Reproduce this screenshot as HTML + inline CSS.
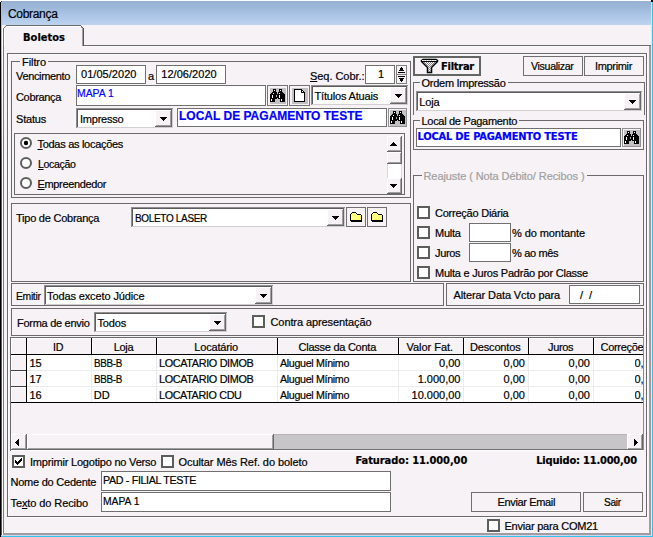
<!DOCTYPE html><html lang="pt-BR"><head><meta charset="utf-8"><title>Cobrança</title><style>
html,body{margin:0;padding:0;background:#f6f2f6;}
#w{position:relative;width:653px;height:537px;overflow:hidden;font-family:'Liberation Sans', sans-serif;font-size:11px;color:#000;}
#w div,#w svg,#w span{position:absolute;box-sizing:border-box;}
#w span{white-space:nowrap;line-height:14px;height:14px;-webkit-text-stroke:0.2px currentColor;}
#w u{text-decoration:underline;text-underline-offset:1px;text-decoration-thickness:1px;}
</style></head><body><div id="w">
<div style="left:0px;top:0px;width:653px;height:537px;background:#f6f2f6;"></div>
<div style="left:0px;top:0px;width:651px;height:25px;background:linear-gradient(#97b1d3 0%,#9db7d9 30%,#a9c3e5 55%,#bdd3ee 100%);"></div>
<div style="left:0px;top:0px;width:653px;height:1px;background:#ffffff;"></div>
<div style="left:0px;top:2px;width:1px;height:535px;background:#000;"></div>
<div style="left:1px;top:2px;width:1px;height:533px;background:linear-gradient(#a8c0e0 0px,#a8c0e0 40px,#8a98a8 90px,#56606c 160px,#4c5560 100%);"></div>
<div style="left:2px;top:25px;width:1px;height:510px;background:#ffffff;"></div>
<div style="left:0px;top:0px;width:1px;height:2px;background:#fff;"></div>
<div style="left:1px;top:1px;width:1px;height:1px;background:#444;"></div>
<div style="left:651px;top:2px;width:1px;height:534px;background:#dfe6f8;"></div>
<div style="left:652px;top:2px;width:1px;height:535px;background:#30c4ec;"></div>
<div style="left:651px;top:0px;width:2px;height:2px;background:#000;"></div>
<div style="left:1px;top:535px;width:651px;height:1px;background:#c8d8f4;"></div>
<div style="left:1px;top:536px;width:652px;height:1px;background:#30c4ec;"></div>
<div style="left:3px;top:46px;width:1px;height:489px;background:#7a7a7a;"></div>
<div style="left:649px;top:46px;width:2px;height:489px;background:#a09ca0;"></div>
<div style="left:3px;top:533px;width:648px;height:2px;background:#a09ca0;"></div>
<div style="left:83px;top:45px;width:568px;height:1px;background:#6a6a6a;"></div>
<div style="left:84px;top:46px;width:565px;height:1px;background:#ffffff;"></div>
<div style="left:4px;top:26px;width:79px;height:20px;background:#f6f2f6;"></div>
<div style="left:6px;top:25px;width:75px;height:1px;background:#6a6a6a;"></div>
<div style="left:5px;top:26px;width:1px;height:1px;background:#6a6a6a;"></div>
<div style="left:4px;top:27px;width:1px;height:1px;background:#6a6a6a;"></div>
<div style="left:3px;top:28px;width:1px;height:18px;background:#7a7a7a;"></div>
<div style="left:6px;top:26px;width:75px;height:1px;background:#ffffff;"></div>
<div style="left:4px;top:28px;width:1px;height:18px;background:#ffffff;"></div>
<div style="left:5px;top:27px;width:1px;height:1px;background:#fff;"></div>
<div style="left:81px;top:26px;width:1px;height:1px;background:#555;"></div>
<div style="left:82px;top:27px;width:1px;height:1px;background:#555;"></div>
<div style="left:83px;top:28px;width:1px;height:18px;background:#555;"></div>
<div style="left:82px;top:28px;width:1px;height:18px;background:#a0a0a0;"></div>
<div style="left:81px;top:27px;width:1px;height:1px;background:#a0a0a0;"></div>
<div style="left:7px;top:53px;width:640px;height:464px;border:1px solid #6a6a6a;"></div>
<div style="left:8px;top:54px;width:638px;height:1px;background:#fff;"></div>
<div style="left:8px;top:54px;width:1px;height:462px;background:#fff;"></div>
<div style="left:7px;top:517px;width:641px;height:1px;background:#fff;"></div>
<div style="left:647px;top:53px;width:1px;height:465px;background:#fff;"></div>
<div style="left:11px;top:61px;width:400px;height:137px;border:1px solid #6a6a6a;"></div>
<div style="left:20px;top:60px;width:28px;height:3px;background:#f6f2f6;"></div>
<div style="left:76px;top:65px;width:70px;height:19px;background:#ffffff;border:1px solid #707070;"></div>
<div style="left:156px;top:65px;width:70px;height:19px;background:#ffffff;border:1px solid #707070;"></div>
<div style="left:365px;top:65px;width:30px;height:19px;background:#ffffff;border:1px solid #707070;"></div>
<div style="left:396px;top:65px;width:11px;height:19px;background:#f6f2f6;border:1px solid #808080;"></div>
<div style="left:397px;top:74px;width:9px;height:1px;background:#808080;"></div>
<div style="left:401px;top:67px;width:1px;height:1px;background:#000;"></div>
<div style="left:400px;top:68px;width:3px;height:1px;background:#000;"></div>
<div style="left:400px;top:69px;width:3px;height:1px;background:#000;"></div>
<div style="left:399px;top:70px;width:5px;height:1px;background:#000;"></div>
<div style="left:398px;top:72px;width:7px;height:1px;background:#000;"></div>
<div style="left:398px;top:76px;width:7px;height:1px;background:#000;"></div>
<div style="left:399px;top:78px;width:5px;height:1px;background:#000;"></div>
<div style="left:400px;top:79px;width:3px;height:1px;background:#000;"></div>
<div style="left:400px;top:80px;width:3px;height:1px;background:#000;"></div>
<div style="left:401px;top:81px;width:1px;height:1px;background:#000;"></div>
<div style="left:76px;top:85px;width:190px;height:21px;background:#ffffff;border:1px solid #707070;"></div>
<div style="left:267px;top:85px;width:21px;height:21px;background:#f6f2f6;border:1px solid #747474;"></div>
<svg style="left:270px;top:88px" width="16" height="16" viewBox="0 0 16 16" shape-rendering="crispEdges"><rect width="16" height="16" fill="#c2c0c2"/><rect x="3" y="1" width="3" height="1" fill="#000"/><rect x="9" y="1" width="3" height="1" fill="#000"/><rect x="3" y="2" width="1" height="1" fill="#000"/><rect x="4" y="2" width="1" height="1" fill="#fff"/><rect x="5" y="2" width="1" height="1" fill="#000"/><rect x="9" y="2" width="1" height="1" fill="#000"/><rect x="10" y="2" width="1" height="1" fill="#fff"/><rect x="11" y="2" width="1" height="1" fill="#000"/><rect x="3" y="3" width="3" height="1" fill="#000"/><rect x="9" y="3" width="3" height="1" fill="#000"/><rect x="2" y="4" width="5" height="1" fill="#000"/><rect x="8" y="4" width="5" height="1" fill="#000"/><rect x="1" y="5" width="2" height="1" fill="#000"/><rect x="3" y="5" width="1" height="1" fill="#fff"/><rect x="4" y="5" width="3" height="1" fill="#000"/><rect x="8" y="5" width="1" height="1" fill="#000"/><rect x="9" y="5" width="1" height="1" fill="#fff"/><rect x="10" y="5" width="4" height="1" fill="#000"/><rect x="0" y="6" width="15" height="1" fill="#000"/><rect x="0" y="7" width="2" height="1" fill="#000"/><rect x="2" y="7" width="1" height="1" fill="#fff"/><rect x="3" y="7" width="3" height="1" fill="#000"/><rect x="6" y="7" width="1" height="1" fill="#b0b0b0"/><rect x="7" y="7" width="2" height="1" fill="#000"/><rect x="9" y="7" width="1" height="1" fill="#fff"/><rect x="10" y="7" width="5" height="1" fill="#000"/><rect x="0" y="8" width="2" height="1" fill="#000"/><rect x="2" y="8" width="1" height="1" fill="#fff"/><rect x="3" y="8" width="3" height="1" fill="#000"/><rect x="6" y="8" width="1" height="1" fill="#b0b0b0"/><rect x="7" y="8" width="2" height="1" fill="#000"/><rect x="9" y="8" width="1" height="1" fill="#fff"/><rect x="10" y="8" width="5" height="1" fill="#000"/><rect x="0" y="9" width="2" height="1" fill="#000"/><rect x="2" y="9" width="1" height="1" fill="#fff"/><rect x="3" y="9" width="6" height="1" fill="#000"/><rect x="9" y="9" width="1" height="1" fill="#fff"/><rect x="10" y="9" width="5" height="1" fill="#000"/><rect x="0" y="10" width="7" height="1" fill="#000"/><rect x="8" y="10" width="7" height="1" fill="#000"/><rect x="0" y="11" width="1" height="1" fill="#000"/><rect x="1" y="11" width="1" height="1" fill="#fff"/><rect x="2" y="11" width="3" height="1" fill="#000"/><rect x="10" y="11" width="1" height="1" fill="#000"/><rect x="11" y="11" width="1" height="1" fill="#fff"/><rect x="12" y="11" width="3" height="1" fill="#000"/><rect x="0" y="12" width="1" height="1" fill="#000"/><rect x="1" y="12" width="1" height="1" fill="#fff"/><rect x="2" y="12" width="3" height="1" fill="#000"/><rect x="10" y="12" width="1" height="1" fill="#000"/><rect x="11" y="12" width="1" height="1" fill="#fff"/><rect x="12" y="12" width="3" height="1" fill="#000"/><rect x="0" y="13" width="5" height="1" fill="#000"/><rect x="10" y="13" width="5" height="1" fill="#000"/></svg>
<div style="left:289px;top:85px;width:21px;height:21px;background:#f6f2f6;border:1px solid #747474;"></div>
<svg style="left:292px;top:88px" width="16" height="16" viewBox="0 0 16 16" shape-rendering="crispEdges"><rect width="16" height="16" fill="#c2c0c2"/><rect x="2" y="1" width="8" height="1" fill="#000"/><rect x="2" y="2" width="1" height="1" fill="#000"/><rect x="3" y="2" width="6" height="1" fill="#fff"/><rect x="9" y="2" width="2" height="1" fill="#000"/><rect x="2" y="3" width="1" height="1" fill="#000"/><rect x="3" y="3" width="6" height="1" fill="#fff"/><rect x="9" y="3" width="1" height="1" fill="#000"/><rect x="10" y="3" width="1" height="1" fill="#fff"/><rect x="11" y="3" width="1" height="1" fill="#000"/><rect x="2" y="4" width="1" height="1" fill="#000"/><rect x="3" y="4" width="6" height="1" fill="#fff"/><rect x="9" y="4" width="4" height="1" fill="#000"/><rect x="2" y="5" width="1" height="1" fill="#000"/><rect x="3" y="5" width="9" height="1" fill="#fff"/><rect x="12" y="5" width="1" height="1" fill="#000"/><rect x="2" y="6" width="1" height="1" fill="#000"/><rect x="3" y="6" width="9" height="1" fill="#fff"/><rect x="12" y="6" width="1" height="1" fill="#000"/><rect x="2" y="7" width="1" height="1" fill="#000"/><rect x="3" y="7" width="9" height="1" fill="#fff"/><rect x="12" y="7" width="1" height="1" fill="#000"/><rect x="2" y="8" width="1" height="1" fill="#000"/><rect x="3" y="8" width="9" height="1" fill="#fff"/><rect x="12" y="8" width="1" height="1" fill="#000"/><rect x="2" y="9" width="1" height="1" fill="#000"/><rect x="3" y="9" width="9" height="1" fill="#fff"/><rect x="12" y="9" width="1" height="1" fill="#000"/><rect x="2" y="10" width="1" height="1" fill="#000"/><rect x="3" y="10" width="9" height="1" fill="#fff"/><rect x="12" y="10" width="1" height="1" fill="#000"/><rect x="2" y="11" width="1" height="1" fill="#000"/><rect x="3" y="11" width="9" height="1" fill="#fff"/><rect x="12" y="11" width="1" height="1" fill="#000"/><rect x="2" y="12" width="1" height="1" fill="#000"/><rect x="3" y="12" width="9" height="1" fill="#fff"/><rect x="12" y="12" width="1" height="1" fill="#000"/><rect x="2" y="13" width="11" height="1" fill="#000"/></svg>
<div style="left:311px;top:85px;width:97px;height:20px;background:#ffffff;"></div>
<div style="left:311px;top:85px;width:97px;height:1px;background:#8e8e8e;"></div>
<div style="left:311px;top:85px;width:1px;height:20px;background:#8e8e8e;"></div>
<div style="left:312px;top:86px;width:95px;height:1px;background:#5c5c5c;"></div>
<div style="left:312px;top:86px;width:1px;height:18px;background:#5c5c5c;"></div>
<div style="left:312px;top:104px;width:96px;height:1px;background:#d2ced2;"></div>
<div style="left:407px;top:86px;width:1px;height:19px;background:#d2ced2;"></div>
<div style="left:390px;top:87px;width:17px;height:17px;background:#f6f2f6;"></div>
<div style="left:390px;top:87px;width:17px;height:1px;background:#ffffff;"></div>
<div style="left:390px;top:87px;width:1px;height:17px;background:#ffffff;"></div>
<div style="left:390px;top:103px;width:17px;height:1px;background:#686868;"></div>
<div style="left:406px;top:87px;width:1px;height:17px;background:#686868;"></div>
<div style="left:391px;top:102px;width:15px;height:1px;background:#a0a0a0;"></div>
<div style="left:405px;top:88px;width:1px;height:15px;background:#a0a0a0;"></div>
<div style="left:395px;top:94px;width:7px;height:1px;background:#000;"></div>
<div style="left:396px;top:95px;width:5px;height:1px;background:#000;"></div>
<div style="left:397px;top:96px;width:3px;height:1px;background:#000;"></div>
<div style="left:398px;top:97px;width:1px;height:1px;background:#000;"></div>
<div style="left:76px;top:108px;width:97px;height:20px;background:#ffffff;"></div>
<div style="left:76px;top:108px;width:97px;height:1px;background:#8e8e8e;"></div>
<div style="left:76px;top:108px;width:1px;height:20px;background:#8e8e8e;"></div>
<div style="left:77px;top:109px;width:95px;height:1px;background:#5c5c5c;"></div>
<div style="left:77px;top:109px;width:1px;height:18px;background:#5c5c5c;"></div>
<div style="left:77px;top:127px;width:96px;height:1px;background:#d2ced2;"></div>
<div style="left:172px;top:109px;width:1px;height:19px;background:#d2ced2;"></div>
<div style="left:155px;top:110px;width:17px;height:17px;background:#f6f2f6;"></div>
<div style="left:155px;top:110px;width:17px;height:1px;background:#ffffff;"></div>
<div style="left:155px;top:110px;width:1px;height:17px;background:#ffffff;"></div>
<div style="left:155px;top:126px;width:17px;height:1px;background:#686868;"></div>
<div style="left:171px;top:110px;width:1px;height:17px;background:#686868;"></div>
<div style="left:156px;top:125px;width:15px;height:1px;background:#a0a0a0;"></div>
<div style="left:170px;top:111px;width:1px;height:15px;background:#a0a0a0;"></div>
<div style="left:160px;top:117px;width:7px;height:1px;background:#000;"></div>
<div style="left:161px;top:118px;width:5px;height:1px;background:#000;"></div>
<div style="left:162px;top:119px;width:3px;height:1px;background:#000;"></div>
<div style="left:163px;top:120px;width:1px;height:1px;background:#000;"></div>
<div style="left:177px;top:108px;width:210px;height:19px;background:#ffffff;border:1px solid #707070;"></div>
<div style="left:388px;top:108px;width:19px;height:19px;background:#f6f2f6;border:1px solid #909090;"></div>
<svg style="left:390px;top:110px" width="16" height="16" viewBox="0 0 16 16" shape-rendering="crispEdges"><rect width="16" height="16" fill="#c2c0c2"/><rect x="3" y="1" width="3" height="1" fill="#000"/><rect x="9" y="1" width="3" height="1" fill="#000"/><rect x="3" y="2" width="1" height="1" fill="#000"/><rect x="4" y="2" width="1" height="1" fill="#fff"/><rect x="5" y="2" width="1" height="1" fill="#000"/><rect x="9" y="2" width="1" height="1" fill="#000"/><rect x="10" y="2" width="1" height="1" fill="#fff"/><rect x="11" y="2" width="1" height="1" fill="#000"/><rect x="3" y="3" width="3" height="1" fill="#000"/><rect x="9" y="3" width="3" height="1" fill="#000"/><rect x="2" y="4" width="5" height="1" fill="#000"/><rect x="8" y="4" width="5" height="1" fill="#000"/><rect x="1" y="5" width="2" height="1" fill="#000"/><rect x="3" y="5" width="1" height="1" fill="#fff"/><rect x="4" y="5" width="3" height="1" fill="#000"/><rect x="8" y="5" width="1" height="1" fill="#000"/><rect x="9" y="5" width="1" height="1" fill="#fff"/><rect x="10" y="5" width="4" height="1" fill="#000"/><rect x="0" y="6" width="15" height="1" fill="#000"/><rect x="0" y="7" width="2" height="1" fill="#000"/><rect x="2" y="7" width="1" height="1" fill="#fff"/><rect x="3" y="7" width="3" height="1" fill="#000"/><rect x="6" y="7" width="1" height="1" fill="#b0b0b0"/><rect x="7" y="7" width="2" height="1" fill="#000"/><rect x="9" y="7" width="1" height="1" fill="#fff"/><rect x="10" y="7" width="5" height="1" fill="#000"/><rect x="0" y="8" width="2" height="1" fill="#000"/><rect x="2" y="8" width="1" height="1" fill="#fff"/><rect x="3" y="8" width="3" height="1" fill="#000"/><rect x="6" y="8" width="1" height="1" fill="#b0b0b0"/><rect x="7" y="8" width="2" height="1" fill="#000"/><rect x="9" y="8" width="1" height="1" fill="#fff"/><rect x="10" y="8" width="5" height="1" fill="#000"/><rect x="0" y="9" width="2" height="1" fill="#000"/><rect x="2" y="9" width="1" height="1" fill="#fff"/><rect x="3" y="9" width="6" height="1" fill="#000"/><rect x="9" y="9" width="1" height="1" fill="#fff"/><rect x="10" y="9" width="5" height="1" fill="#000"/><rect x="0" y="10" width="7" height="1" fill="#000"/><rect x="8" y="10" width="7" height="1" fill="#000"/><rect x="0" y="11" width="1" height="1" fill="#000"/><rect x="1" y="11" width="1" height="1" fill="#fff"/><rect x="2" y="11" width="3" height="1" fill="#000"/><rect x="10" y="11" width="1" height="1" fill="#000"/><rect x="11" y="11" width="1" height="1" fill="#fff"/><rect x="12" y="11" width="3" height="1" fill="#000"/><rect x="0" y="12" width="1" height="1" fill="#000"/><rect x="1" y="12" width="1" height="1" fill="#fff"/><rect x="2" y="12" width="3" height="1" fill="#000"/><rect x="10" y="12" width="1" height="1" fill="#000"/><rect x="11" y="12" width="1" height="1" fill="#fff"/><rect x="12" y="12" width="3" height="1" fill="#000"/><rect x="0" y="13" width="5" height="1" fill="#000"/><rect x="10" y="13" width="5" height="1" fill="#000"/></svg>
<div style="left:14px;top:133px;width:391px;height:62px;border:1px solid #6a6a6a;"></div>
<svg style="left:20px;top:137px" width="12" height="12" viewBox="0 0 12 12"><circle cx="6" cy="6" r="5" fill="#fff" stroke="#5c5e5c" stroke-width="2"/><circle cx="6" cy="6" r="2.2" fill="#000"/></svg>
<svg style="left:20px;top:157px" width="12" height="12" viewBox="0 0 12 12"><circle cx="6" cy="6" r="5" fill="#fff" stroke="#5c5e5c" stroke-width="2"/></svg>
<svg style="left:20px;top:177px" width="12" height="12" viewBox="0 0 12 12"><circle cx="6" cy="6" r="5" fill="#fff" stroke="#5c5e5c" stroke-width="2"/></svg>
<div style="left:387px;top:136px;width:15px;height:16px;background:#f6f2f6;"></div>
<div style="left:387px;top:136px;width:15px;height:1px;background:#ffffff;"></div>
<div style="left:387px;top:136px;width:1px;height:16px;background:#ffffff;"></div>
<div style="left:387px;top:151px;width:15px;height:1px;background:#686868;"></div>
<div style="left:401px;top:136px;width:1px;height:16px;background:#686868;"></div>
<div style="left:388px;top:150px;width:13px;height:1px;background:#a0a0a0;"></div>
<div style="left:400px;top:137px;width:1px;height:14px;background:#a0a0a0;"></div>
<div style="left:393px;top:142px;width:1px;height:1px;background:#000;"></div>
<div style="left:392px;top:143px;width:3px;height:1px;background:#000;"></div>
<div style="left:391px;top:144px;width:5px;height:1px;background:#000;"></div>
<div style="left:390px;top:145px;width:7px;height:1px;background:#000;"></div>
<div style="left:387px;top:152px;width:15px;height:12px;background:#f6f2f6;"></div>
<div style="left:387px;top:152px;width:15px;height:1px;background:#ffffff;"></div>
<div style="left:387px;top:152px;width:1px;height:12px;background:#ffffff;"></div>
<div style="left:387px;top:163px;width:15px;height:1px;background:#686868;"></div>
<div style="left:401px;top:152px;width:1px;height:12px;background:#686868;"></div>
<div style="left:388px;top:162px;width:13px;height:1px;background:#a0a0a0;"></div>
<div style="left:400px;top:153px;width:1px;height:10px;background:#a0a0a0;"></div>
<div style="left:387px;top:164px;width:15px;height:14px;background:#ffffff;"></div>
<div style="left:387px;top:164px;width:1px;height:14px;background:#d8d8d8;"></div>
<div style="left:401px;top:164px;width:1px;height:14px;background:#d8d8d8;"></div>
<div style="left:387px;top:178px;width:15px;height:16px;background:#f6f2f6;"></div>
<div style="left:387px;top:178px;width:15px;height:1px;background:#ffffff;"></div>
<div style="left:387px;top:178px;width:1px;height:16px;background:#ffffff;"></div>
<div style="left:387px;top:193px;width:15px;height:1px;background:#686868;"></div>
<div style="left:401px;top:178px;width:1px;height:16px;background:#686868;"></div>
<div style="left:388px;top:192px;width:13px;height:1px;background:#a0a0a0;"></div>
<div style="left:400px;top:179px;width:1px;height:14px;background:#a0a0a0;"></div>
<div style="left:390px;top:184px;width:7px;height:1px;background:#000;"></div>
<div style="left:391px;top:185px;width:5px;height:1px;background:#000;"></div>
<div style="left:392px;top:186px;width:3px;height:1px;background:#000;"></div>
<div style="left:393px;top:187px;width:1px;height:1px;background:#000;"></div>
<div style="left:11px;top:203px;width:400px;height:79px;border:1px solid #6a6a6a;"></div>
<div style="left:131px;top:207px;width:214px;height:20px;background:#ffffff;"></div>
<div style="left:131px;top:207px;width:214px;height:1px;background:#8e8e8e;"></div>
<div style="left:131px;top:207px;width:1px;height:20px;background:#8e8e8e;"></div>
<div style="left:132px;top:208px;width:212px;height:1px;background:#5c5c5c;"></div>
<div style="left:132px;top:208px;width:1px;height:18px;background:#5c5c5c;"></div>
<div style="left:132px;top:226px;width:213px;height:1px;background:#d2ced2;"></div>
<div style="left:344px;top:208px;width:1px;height:19px;background:#d2ced2;"></div>
<div style="left:327px;top:209px;width:17px;height:17px;background:#f6f2f6;"></div>
<div style="left:327px;top:209px;width:17px;height:1px;background:#ffffff;"></div>
<div style="left:327px;top:209px;width:1px;height:17px;background:#ffffff;"></div>
<div style="left:327px;top:225px;width:17px;height:1px;background:#686868;"></div>
<div style="left:343px;top:209px;width:1px;height:17px;background:#686868;"></div>
<div style="left:328px;top:224px;width:15px;height:1px;background:#a0a0a0;"></div>
<div style="left:342px;top:210px;width:1px;height:15px;background:#a0a0a0;"></div>
<div style="left:332px;top:216px;width:7px;height:1px;background:#000;"></div>
<div style="left:333px;top:217px;width:5px;height:1px;background:#000;"></div>
<div style="left:334px;top:218px;width:3px;height:1px;background:#000;"></div>
<div style="left:335px;top:219px;width:1px;height:1px;background:#000;"></div>
<div style="left:346px;top:207px;width:20px;height:20px;background:#f6f2f6;border:1px solid #707070;"></div>
<svg style="left:350px;top:212px" width="12" height="10" viewBox="0 0 12 10" shape-rendering="crispEdges"><rect x="2" y="0" width="4" height="1" fill="#000"/><rect x="1" y="1" width="1" height="1" fill="#000"/><rect x="2" y="1" width="4" height="1" fill="#ffff78"/><rect x="6" y="1" width="1" height="1" fill="#000"/><rect x="0" y="2" width="1" height="1" fill="#000"/><rect x="1" y="2" width="6" height="1" fill="#ffff78"/><rect x="7" y="2" width="4" height="1" fill="#000"/><rect x="0" y="3" width="1" height="1" fill="#000"/><rect x="1" y="3" width="10" height="1" fill="#ffff78"/><rect x="11" y="3" width="1" height="1" fill="#000"/><rect x="0" y="4" width="1" height="1" fill="#000"/><rect x="1" y="4" width="10" height="1" fill="#ffff78"/><rect x="11" y="4" width="1" height="1" fill="#000"/><rect x="0" y="5" width="1" height="1" fill="#000"/><rect x="1" y="5" width="10" height="1" fill="#ffff78"/><rect x="11" y="5" width="1" height="1" fill="#000"/><rect x="0" y="6" width="1" height="1" fill="#000"/><rect x="1" y="6" width="10" height="1" fill="#ffff78"/><rect x="11" y="6" width="1" height="1" fill="#000"/><rect x="0" y="7" width="1" height="1" fill="#000"/><rect x="1" y="7" width="10" height="1" fill="#ffff78"/><rect x="11" y="7" width="1" height="1" fill="#000"/><rect x="0" y="8" width="12" height="1" fill="#000"/><rect x="1" y="9" width="11" height="1" fill="#000"/></svg>
<div style="left:367px;top:207px;width:20px;height:20px;background:#f6f2f6;border:1px solid #707070;"></div>
<svg style="left:371px;top:212px" width="12" height="10" viewBox="0 0 12 10" shape-rendering="crispEdges"><rect x="2" y="0" width="4" height="1" fill="#000"/><rect x="1" y="1" width="1" height="1" fill="#000"/><rect x="2" y="1" width="4" height="1" fill="#ffff78"/><rect x="6" y="1" width="1" height="1" fill="#000"/><rect x="0" y="2" width="1" height="1" fill="#000"/><rect x="1" y="2" width="6" height="1" fill="#ffff78"/><rect x="7" y="2" width="4" height="1" fill="#000"/><rect x="0" y="3" width="1" height="1" fill="#000"/><rect x="1" y="3" width="10" height="1" fill="#ffff78"/><rect x="11" y="3" width="1" height="1" fill="#000"/><rect x="0" y="4" width="1" height="1" fill="#000"/><rect x="1" y="4" width="10" height="1" fill="#ffff78"/><rect x="11" y="4" width="1" height="1" fill="#000"/><rect x="0" y="5" width="1" height="1" fill="#000"/><rect x="1" y="5" width="10" height="1" fill="#ffff78"/><rect x="11" y="5" width="1" height="1" fill="#000"/><rect x="0" y="6" width="1" height="1" fill="#000"/><rect x="1" y="6" width="10" height="1" fill="#ffff78"/><rect x="11" y="6" width="1" height="1" fill="#000"/><rect x="0" y="7" width="1" height="1" fill="#000"/><rect x="1" y="7" width="10" height="1" fill="#ffff78"/><rect x="11" y="7" width="1" height="1" fill="#000"/><rect x="0" y="8" width="12" height="1" fill="#000"/><rect x="1" y="9" width="11" height="1" fill="#000"/></svg>
<div style="left:413px;top:56px;width:68px;height:20px;background:#f6f2f6;border:2px solid #636563;"></div>
<svg style="left:420px;top:58px" width="19" height="16" viewBox="0 0 19 16"><path d="M1.5 2.5 L3 1.5 L16 1.5 L17.5 2.5 L17.5 3.5 L11.5 9.5 L11.5 14.5 L7.5 14.5 L7.5 9.5 L1.5 3.5 Z" fill="#fff" stroke="#000" stroke-width="1.5"/><g shape-rendering="crispEdges"><rect x="4" y="4" width="1" height="1" fill="#808080"/><rect x="6" y="4" width="1" height="1" fill="#808080"/><rect x="8" y="4" width="1" height="1" fill="#808080"/><rect x="10" y="4" width="1" height="1" fill="#808080"/><rect x="12" y="4" width="1" height="1" fill="#808080"/><rect x="14" y="4" width="1" height="1" fill="#808080"/><rect x="5" y="5" width="1" height="1" fill="#808080"/><rect x="7" y="5" width="1" height="1" fill="#808080"/><rect x="9" y="5" width="1" height="1" fill="#808080"/><rect x="11" y="5" width="1" height="1" fill="#808080"/><rect x="13" y="5" width="1" height="1" fill="#808080"/><rect x="6" y="6" width="1" height="1" fill="#808080"/><rect x="8" y="6" width="1" height="1" fill="#808080"/><rect x="10" y="6" width="1" height="1" fill="#808080"/><rect x="12" y="6" width="1" height="1" fill="#808080"/><rect x="7" y="7" width="1" height="1" fill="#808080"/><rect x="9" y="7" width="1" height="1" fill="#808080"/><rect x="11" y="7" width="1" height="1" fill="#808080"/><rect x="8" y="8" width="1" height="1" fill="#808080"/><rect x="10" y="8" width="1" height="1" fill="#808080"/><rect x="9" y="9" width="1" height="1" fill="#808080"/><rect x="8" y="10" width="1" height="1" fill="#808080"/><rect x="10" y="10" width="1" height="1" fill="#808080"/><rect x="9" y="11" width="1" height="1" fill="#808080"/><rect x="8" y="12" width="1" height="1" fill="#808080"/><rect x="10" y="12" width="1" height="1" fill="#808080"/><rect x="9" y="13" width="1" height="1" fill="#808080"/></g><path d="M2 2.5 H17" stroke="#fff" stroke-width="1" stroke-dasharray="1.5 1"/><path d="M1.5 3.5 H17.5" stroke="#000" stroke-width="1"/></svg>
<div style="left:523px;top:56px;width:60px;height:20px;background:#f6f2f6;border:1px solid #707070;"></div>
<div style="left:584px;top:56px;width:60px;height:20px;background:#f6f2f6;border:1px solid #707070;"></div>
<div style="left:413px;top:82px;width:232px;height:1px;background:#6a6a6a;"></div>
<div style="left:413px;top:82px;width:1px;height:33px;background:#6a6a6a;"></div>
<div style="left:644px;top:82px;width:1px;height:33px;background:#6a6a6a;"></div>
<div style="left:419.5px;top:81px;width:88px;height:3px;background:#f6f2f6;"></div>
<div style="left:416px;top:91px;width:226px;height:20px;background:#ffffff;"></div>
<div style="left:416px;top:91px;width:226px;height:1px;background:#8e8e8e;"></div>
<div style="left:416px;top:91px;width:1px;height:20px;background:#8e8e8e;"></div>
<div style="left:417px;top:92px;width:224px;height:1px;background:#5c5c5c;"></div>
<div style="left:417px;top:92px;width:1px;height:18px;background:#5c5c5c;"></div>
<div style="left:417px;top:110px;width:225px;height:1px;background:#d2ced2;"></div>
<div style="left:641px;top:92px;width:1px;height:19px;background:#d2ced2;"></div>
<div style="left:624px;top:93px;width:17px;height:17px;background:#f6f2f6;"></div>
<div style="left:624px;top:93px;width:17px;height:1px;background:#ffffff;"></div>
<div style="left:624px;top:93px;width:1px;height:17px;background:#ffffff;"></div>
<div style="left:624px;top:109px;width:17px;height:1px;background:#686868;"></div>
<div style="left:640px;top:93px;width:1px;height:17px;background:#686868;"></div>
<div style="left:625px;top:108px;width:15px;height:1px;background:#a0a0a0;"></div>
<div style="left:639px;top:94px;width:1px;height:15px;background:#a0a0a0;"></div>
<div style="left:629px;top:100px;width:7px;height:1px;background:#000;"></div>
<div style="left:630px;top:101px;width:5px;height:1px;background:#000;"></div>
<div style="left:631px;top:102px;width:3px;height:1px;background:#000;"></div>
<div style="left:632px;top:103px;width:1px;height:1px;background:#000;"></div>
<div style="left:413px;top:120px;width:231px;height:30px;border:1px solid #6a6a6a;"></div>
<div style="left:419.5px;top:119px;width:99.5px;height:3px;background:#f6f2f6;"></div>
<div style="left:416px;top:128px;width:205px;height:19px;background:#ffffff;border:1px solid #707070;"></div>
<div style="left:622px;top:128px;width:19px;height:19px;background:#f6f2f6;border:1px solid #909090;"></div>
<svg style="left:624px;top:130px" width="16" height="16" viewBox="0 0 16 16" shape-rendering="crispEdges"><rect width="16" height="16" fill="#c2c0c2"/><rect x="3" y="1" width="3" height="1" fill="#000"/><rect x="9" y="1" width="3" height="1" fill="#000"/><rect x="3" y="2" width="1" height="1" fill="#000"/><rect x="4" y="2" width="1" height="1" fill="#fff"/><rect x="5" y="2" width="1" height="1" fill="#000"/><rect x="9" y="2" width="1" height="1" fill="#000"/><rect x="10" y="2" width="1" height="1" fill="#fff"/><rect x="11" y="2" width="1" height="1" fill="#000"/><rect x="3" y="3" width="3" height="1" fill="#000"/><rect x="9" y="3" width="3" height="1" fill="#000"/><rect x="2" y="4" width="5" height="1" fill="#000"/><rect x="8" y="4" width="5" height="1" fill="#000"/><rect x="1" y="5" width="2" height="1" fill="#000"/><rect x="3" y="5" width="1" height="1" fill="#fff"/><rect x="4" y="5" width="3" height="1" fill="#000"/><rect x="8" y="5" width="1" height="1" fill="#000"/><rect x="9" y="5" width="1" height="1" fill="#fff"/><rect x="10" y="5" width="4" height="1" fill="#000"/><rect x="0" y="6" width="15" height="1" fill="#000"/><rect x="0" y="7" width="2" height="1" fill="#000"/><rect x="2" y="7" width="1" height="1" fill="#fff"/><rect x="3" y="7" width="3" height="1" fill="#000"/><rect x="6" y="7" width="1" height="1" fill="#b0b0b0"/><rect x="7" y="7" width="2" height="1" fill="#000"/><rect x="9" y="7" width="1" height="1" fill="#fff"/><rect x="10" y="7" width="5" height="1" fill="#000"/><rect x="0" y="8" width="2" height="1" fill="#000"/><rect x="2" y="8" width="1" height="1" fill="#fff"/><rect x="3" y="8" width="3" height="1" fill="#000"/><rect x="6" y="8" width="1" height="1" fill="#b0b0b0"/><rect x="7" y="8" width="2" height="1" fill="#000"/><rect x="9" y="8" width="1" height="1" fill="#fff"/><rect x="10" y="8" width="5" height="1" fill="#000"/><rect x="0" y="9" width="2" height="1" fill="#000"/><rect x="2" y="9" width="1" height="1" fill="#fff"/><rect x="3" y="9" width="6" height="1" fill="#000"/><rect x="9" y="9" width="1" height="1" fill="#fff"/><rect x="10" y="9" width="5" height="1" fill="#000"/><rect x="0" y="10" width="7" height="1" fill="#000"/><rect x="8" y="10" width="7" height="1" fill="#000"/><rect x="0" y="11" width="1" height="1" fill="#000"/><rect x="1" y="11" width="1" height="1" fill="#fff"/><rect x="2" y="11" width="3" height="1" fill="#000"/><rect x="10" y="11" width="1" height="1" fill="#000"/><rect x="11" y="11" width="1" height="1" fill="#fff"/><rect x="12" y="11" width="3" height="1" fill="#000"/><rect x="0" y="12" width="1" height="1" fill="#000"/><rect x="1" y="12" width="1" height="1" fill="#fff"/><rect x="2" y="12" width="3" height="1" fill="#000"/><rect x="10" y="12" width="1" height="1" fill="#000"/><rect x="11" y="12" width="1" height="1" fill="#fff"/><rect x="12" y="12" width="3" height="1" fill="#000"/><rect x="0" y="13" width="5" height="1" fill="#000"/><rect x="10" y="13" width="5" height="1" fill="#000"/></svg>
<div style="left:413px;top:175px;width:231px;height:107px;border:1px solid #6a6a6a;"></div>
<div style="left:421.5px;top:174px;width:165px;height:3px;background:#f6f2f6;"></div>
<div style="left:417px;top:206px;width:13px;height:13px;background:#ffffff;border:2px solid #5c5e5c;"></div>
<div style="left:417px;top:226px;width:13px;height:13px;background:#ffffff;border:2px solid #5c5e5c;"></div>
<div style="left:417px;top:246px;width:13px;height:13px;background:#ffffff;border:2px solid #5c5e5c;"></div>
<div style="left:417px;top:266px;width:13px;height:13px;background:#ffffff;border:2px solid #5c5e5c;"></div>
<div style="left:469px;top:223px;width:42px;height:19px;background:#ffffff;border:1px solid #707070;"></div>
<div style="left:469px;top:243px;width:42px;height:19px;background:#ffffff;border:1px solid #707070;"></div>
<div style="left:11px;top:283px;width:433px;height:23px;border:1px solid #6a6a6a;"></div>
<div style="left:44px;top:285px;width:229px;height:20px;background:#ffffff;"></div>
<div style="left:44px;top:285px;width:229px;height:1px;background:#8e8e8e;"></div>
<div style="left:44px;top:285px;width:1px;height:20px;background:#8e8e8e;"></div>
<div style="left:45px;top:286px;width:227px;height:1px;background:#5c5c5c;"></div>
<div style="left:45px;top:286px;width:1px;height:18px;background:#5c5c5c;"></div>
<div style="left:45px;top:304px;width:228px;height:1px;background:#d2ced2;"></div>
<div style="left:272px;top:286px;width:1px;height:19px;background:#d2ced2;"></div>
<div style="left:255px;top:287px;width:17px;height:17px;background:#f6f2f6;"></div>
<div style="left:255px;top:287px;width:17px;height:1px;background:#ffffff;"></div>
<div style="left:255px;top:287px;width:1px;height:17px;background:#ffffff;"></div>
<div style="left:255px;top:303px;width:17px;height:1px;background:#686868;"></div>
<div style="left:271px;top:287px;width:1px;height:17px;background:#686868;"></div>
<div style="left:256px;top:302px;width:15px;height:1px;background:#a0a0a0;"></div>
<div style="left:270px;top:288px;width:1px;height:15px;background:#a0a0a0;"></div>
<div style="left:260px;top:294px;width:7px;height:1px;background:#000;"></div>
<div style="left:261px;top:295px;width:5px;height:1px;background:#000;"></div>
<div style="left:262px;top:296px;width:3px;height:1px;background:#000;"></div>
<div style="left:263px;top:297px;width:1px;height:1px;background:#000;"></div>
<div style="left:446px;top:283px;width:198px;height:23px;border:1px solid #6a6a6a;"></div>
<div style="left:569px;top:285px;width:71px;height:19px;background:#ffffff;border:1px solid #707070;"></div>
<div style="left:11px;top:308px;width:633px;height:28px;border:1px solid #6a6a6a;"></div>
<div style="left:94px;top:312px;width:133px;height:20px;background:#ffffff;"></div>
<div style="left:94px;top:312px;width:133px;height:1px;background:#8e8e8e;"></div>
<div style="left:94px;top:312px;width:1px;height:20px;background:#8e8e8e;"></div>
<div style="left:95px;top:313px;width:131px;height:1px;background:#5c5c5c;"></div>
<div style="left:95px;top:313px;width:1px;height:18px;background:#5c5c5c;"></div>
<div style="left:95px;top:331px;width:132px;height:1px;background:#d2ced2;"></div>
<div style="left:226px;top:313px;width:1px;height:19px;background:#d2ced2;"></div>
<div style="left:209px;top:314px;width:17px;height:17px;background:#f6f2f6;"></div>
<div style="left:209px;top:314px;width:17px;height:1px;background:#ffffff;"></div>
<div style="left:209px;top:314px;width:1px;height:17px;background:#ffffff;"></div>
<div style="left:209px;top:330px;width:17px;height:1px;background:#686868;"></div>
<div style="left:225px;top:314px;width:1px;height:17px;background:#686868;"></div>
<div style="left:210px;top:329px;width:15px;height:1px;background:#a0a0a0;"></div>
<div style="left:224px;top:315px;width:1px;height:15px;background:#a0a0a0;"></div>
<div style="left:214px;top:321px;width:7px;height:1px;background:#000;"></div>
<div style="left:215px;top:322px;width:5px;height:1px;background:#000;"></div>
<div style="left:216px;top:323px;width:3px;height:1px;background:#000;"></div>
<div style="left:217px;top:324px;width:1px;height:1px;background:#000;"></div>
<div style="left:252px;top:315px;width:13px;height:13px;background:#ffffff;border:2px solid #5c5e5c;"></div>
<div style="left:10px;top:337px;width:634px;height:1px;background:#6a6a6a;"></div>
<div style="left:10px;top:337px;width:1px;height:114px;background:#6a6a6a;"></div>
<div style="left:643px;top:338px;width:1px;height:113px;background:#8c8c8c;"></div>
<div style="left:11px;top:450px;width:633px;height:1px;background:#ffffff;"></div>
<div style="left:27px;top:355px;width:616px;height:47px;background:#ffffff;"></div>
<div style="left:11px;top:338px;width:632px;height:1px;background:#ffffff;"></div>
<div style="left:11px;top:338px;width:1px;height:64px;background:#ffffff;"></div>
<div style="left:27px;top:338px;width:1px;height:16px;background:#ffffff;"></div>
<div style="left:92px;top:338px;width:1px;height:16px;background:#ffffff;"></div>
<div style="left:157px;top:338px;width:1px;height:16px;background:#ffffff;"></div>
<div style="left:278px;top:338px;width:1px;height:16px;background:#ffffff;"></div>
<div style="left:399px;top:338px;width:1px;height:16px;background:#ffffff;"></div>
<div style="left:464px;top:338px;width:1px;height:16px;background:#ffffff;"></div>
<div style="left:529px;top:338px;width:1px;height:16px;background:#ffffff;"></div>
<div style="left:594px;top:338px;width:1px;height:16px;background:#ffffff;"></div>
<div style="left:11px;top:355px;width:15px;height:1px;background:#ffffff;"></div>
<div style="left:11px;top:371px;width:15px;height:1px;background:#ffffff;"></div>
<div style="left:11px;top:387px;width:15px;height:1px;background:#ffffff;"></div>
<div style="left:11px;top:354px;width:632px;height:1px;background:#000;"></div>
<div style="left:26px;top:338px;width:1px;height:17px;background:#000;"></div>
<div style="left:91px;top:338px;width:1px;height:17px;background:#000;"></div>
<div style="left:156px;top:338px;width:1px;height:17px;background:#000;"></div>
<div style="left:277px;top:338px;width:1px;height:17px;background:#000;"></div>
<div style="left:398px;top:338px;width:1px;height:17px;background:#000;"></div>
<div style="left:463px;top:338px;width:1px;height:17px;background:#000;"></div>
<div style="left:528px;top:338px;width:1px;height:17px;background:#000;"></div>
<div style="left:593px;top:338px;width:1px;height:17px;background:#000;"></div>
<div style="left:26px;top:354px;width:1px;height:49px;background:#000;"></div>
<div style="left:11px;top:402px;width:632px;height:1px;background:#000;"></div>
<div style="left:11px;top:370px;width:15px;height:1px;background:#404040;"></div>
<div style="left:27px;top:370px;width:616px;height:1px;background:#ebebeb;"></div>
<div style="left:11px;top:386px;width:15px;height:1px;background:#404040;"></div>
<div style="left:27px;top:386px;width:616px;height:1px;background:#ebebeb;"></div>
<div style="left:91px;top:355px;width:1px;height:47px;background:#ebebeb;"></div>
<div style="left:156px;top:355px;width:1px;height:47px;background:#ebebeb;"></div>
<div style="left:277px;top:355px;width:1px;height:47px;background:#ebebeb;"></div>
<div style="left:398px;top:355px;width:1px;height:47px;background:#ebebeb;"></div>
<div style="left:463px;top:355px;width:1px;height:47px;background:#ebebeb;"></div>
<div style="left:528px;top:355px;width:1px;height:47px;background:#ebebeb;"></div>
<div style="left:593px;top:355px;width:1px;height:47px;background:#ebebeb;"></div>
<div style="left:11px;top:434px;width:632px;height:16px;background:#c8c5c8;"></div>
<div style="left:27px;top:434px;width:600px;height:1px;background:#b8b4b8;"></div>
<div style="left:27px;top:449px;width:600px;height:1px;background:#707070;"></div>
<div style="left:11px;top:434px;width:16px;height:16px;background:#f6f2f6;"></div>
<div style="left:11px;top:434px;width:16px;height:1px;background:#ffffff;"></div>
<div style="left:11px;top:434px;width:1px;height:16px;background:#ffffff;"></div>
<div style="left:11px;top:449px;width:16px;height:1px;background:#686868;"></div>
<div style="left:26px;top:434px;width:1px;height:16px;background:#686868;"></div>
<div style="left:12px;top:448px;width:14px;height:1px;background:#a0a0a0;"></div>
<div style="left:25px;top:435px;width:1px;height:14px;background:#a0a0a0;"></div>
<div style="left:15px;top:442px;width:1px;height:1px;background:#000;"></div>
<div style="left:16px;top:441px;width:1px;height:3px;background:#000;"></div>
<div style="left:17px;top:440px;width:1px;height:5px;background:#000;"></div>
<div style="left:18px;top:439px;width:1px;height:7px;background:#000;"></div>
<div style="left:27px;top:434px;width:247px;height:16px;background:#f6f2f6;"></div>
<div style="left:27px;top:434px;width:247px;height:1px;background:#ffffff;"></div>
<div style="left:27px;top:434px;width:1px;height:16px;background:#ffffff;"></div>
<div style="left:27px;top:449px;width:247px;height:1px;background:#686868;"></div>
<div style="left:273px;top:434px;width:1px;height:16px;background:#686868;"></div>
<div style="left:28px;top:448px;width:245px;height:1px;background:#a0a0a0;"></div>
<div style="left:272px;top:435px;width:1px;height:14px;background:#a0a0a0;"></div>
<div style="left:627px;top:434px;width:16px;height:16px;background:#f6f2f6;"></div>
<div style="left:627px;top:434px;width:16px;height:1px;background:#ffffff;"></div>
<div style="left:627px;top:434px;width:1px;height:16px;background:#ffffff;"></div>
<div style="left:627px;top:449px;width:16px;height:1px;background:#686868;"></div>
<div style="left:642px;top:434px;width:1px;height:16px;background:#686868;"></div>
<div style="left:628px;top:448px;width:14px;height:1px;background:#a0a0a0;"></div>
<div style="left:641px;top:435px;width:1px;height:14px;background:#a0a0a0;"></div>
<div style="left:634px;top:439px;width:1px;height:7px;background:#000;"></div>
<div style="left:635px;top:440px;width:1px;height:5px;background:#000;"></div>
<div style="left:636px;top:441px;width:1px;height:3px;background:#000;"></div>
<div style="left:637px;top:442px;width:1px;height:1px;background:#000;"></div>
<div style="left:12px;top:455px;width:13px;height:13px;background:#ffffff;border:2px solid #5c5e5c;"></div>
<div style="left:15px;top:460px;width:1px;height:3px;background:#000;"></div>
<div style="left:16px;top:461px;width:1px;height:3px;background:#000;"></div>
<div style="left:17px;top:462px;width:1px;height:3px;background:#000;"></div>
<div style="left:18px;top:461px;width:1px;height:3px;background:#000;"></div>
<div style="left:19px;top:460px;width:1px;height:3px;background:#000;"></div>
<div style="left:20px;top:459px;width:1px;height:3px;background:#000;"></div>
<div style="left:21px;top:458px;width:1px;height:3px;background:#000;"></div>
<div style="left:161px;top:455px;width:13px;height:13px;background:#ffffff;border:2px solid #5c5e5c;"></div>
<div style="left:101px;top:471px;width:290px;height:20px;background:#ffffff;border:1px solid #707070;"></div>
<div style="left:101px;top:492px;width:290px;height:20px;background:#ffffff;border:1px solid #707070;"></div>
<div style="left:471px;top:492px;width:110px;height:20px;background:#f6f2f6;border:1px solid #707070;"></div>
<div style="left:583px;top:492px;width:60px;height:20px;background:#f6f2f6;border:1px solid #707070;"></div>
<div style="left:487px;top:519px;width:13px;height:13px;background:#ffffff;border:2px solid #5c5e5c;"></div>
<span style="top:31px;font-size:11px;font-family:'DejaVu Sans Condensed', 'Liberation Sans', sans-serif;font-weight:bold;letter-spacing:0.018px;left:23.00px;">Boletos</span>
<span style="top:7px;font-size:12px;letter-spacing:-0.316px;left:8.00px;">Cobrança</span>
<span style="top:55px;font-size:11px;letter-spacing:-0.076px;left:22.00px;">Filtro</span>
<span style="top:69px;font-size:11px;letter-spacing:-0.348px;left:16.00px;">Vencimento</span>
<span style="top:67px;font-size:11px;letter-spacing:0.044px;left:81.00px;">01/05/2020</span>
<span style="top:69px;font-size:11px;left:148.00px;">a</span>
<span style="top:67px;font-size:11px;letter-spacing:0.044px;left:161.25px;">12/06/2020</span>
<span style="top:69px;font-size:11px;letter-spacing:-0.050px;left:310.00px;"><u>S</u>eq. Cobr.:</span>
<span style="top:67px;font-size:11px;left:378.00px;">1</span>
<span style="top:90px;font-size:11px;letter-spacing:-0.338px;left:16.00px;">Cobrança</span>
<span style="top:86px;font-size:11px;color:#0000ff;left:77.00px;transform:scaleX(0.944);transform-origin:left center;">MAPA 1</span>
<span style="top:89px;font-size:11px;letter-spacing:-0.182px;left:314.50px;">Títulos Atuais</span>
<span style="top:112px;font-size:11px;letter-spacing:-0.198px;left:16.00px;">Status</span>
<span style="top:112px;font-size:11px;letter-spacing:-0.219px;left:80.00px;">Impresso</span>
<span style="top:109px;font-size:12px;font-family:'Liberation Sans', sans-serif;font-weight:bold;color:#0000ff;letter-spacing:0.006px;left:179.00px;">LOCAL DE PAGAMENTO TESTE</span>
<span style="top:137px;font-size:11px;letter-spacing:-0.294px;left:37.50px;"><u>T</u>odas as locações</span>
<span style="top:157px;font-size:11px;letter-spacing:-0.350px;left:37.50px;transform:scaleX(0.958);transform-origin:left center;"><u>L</u>ocação</span>
<span style="top:177px;font-size:11px;letter-spacing:-0.350px;left:37.50px;"><u>E</u>mpreendedor</span>
<span style="top:211px;font-size:11px;letter-spacing:-0.237px;left:16.00px;">Tipo de Cobrança</span>
<span style="top:211px;font-size:11px;letter-spacing:-0.350px;left:135.00px;transform:scaleX(0.907);transform-origin:left center;">BOLETO LASER</span>
<span style="top:60px;font-size:11px;font-family:'DejaVu Sans Condensed', 'Liberation Sans', sans-serif;font-weight:bold;letter-spacing:-0.246px;left:441.00px;">Filtrar</span>
<span style="top:59px;font-size:11px;letter-spacing:-0.350px;left:531.00px;transform:scaleX(0.966);transform-origin:left center;">Visualizar</span>
<span style="top:59px;font-size:11px;letter-spacing:-0.340px;left:595.00px;">Imprimir</span>
<span style="top:76px;font-size:11px;letter-spacing:-0.269px;left:421.50px;">Ordem Impressão</span>
<span style="top:95px;font-size:11px;letter-spacing:-0.199px;left:419.30px;">Loja</span>
<span style="top:114px;font-size:11px;letter-spacing:-0.301px;left:421.50px;">Local de Pagamento</span>
<span style="top:130px;font-size:11px;font-family:'DejaVu Sans Condensed', 'Liberation Sans', sans-serif;font-weight:bold;color:#0000ff;letter-spacing:-0.199px;left:417.50px;">LOCAL DE PAGAMENTO TESTE</span>
<span style="top:169px;font-size:11px;color:#a0a0a0;letter-spacing:-0.087px;left:423.50px;">Reajuste ( Nota Débito/ Recibos )</span>
<span style="top:206px;font-size:11px;letter-spacing:-0.235px;left:435.00px;">Correção Diária</span>
<span style="top:226px;font-size:11px;letter-spacing:-0.281px;left:435.00px;">Multa</span>
<span style="top:246px;font-size:11px;letter-spacing:-0.350px;left:435.00px;">Juros</span>
<span style="top:266px;font-size:11px;letter-spacing:-0.232px;left:435.00px;">Multa e Juros Padrão por Classe</span>
<span style="top:226px;font-size:11px;letter-spacing:-0.077px;left:512.00px;">% do montante</span>
<span style="top:246px;font-size:11px;letter-spacing:-0.350px;left:512.00px;">% ao mês</span>
<span style="top:289px;font-size:11px;letter-spacing:-0.350px;left:16.00px;transform:scaleX(0.942);transform-origin:left center;">Emitir</span>
<span style="top:289px;font-size:11px;letter-spacing:-0.114px;left:47.00px;">Todas exceto Júdice</span>
<span style="top:288px;font-size:11px;letter-spacing:-0.107px;left:453.50px;">Alterar Data Vcto para</span>
<span style="top:288px;font-size:11px;letter-spacing:1.443px;left:580.00px;">/ /</span>
<span style="top:316px;font-size:11px;letter-spacing:-0.281px;left:17.00px;">Forma de envio</span>
<span style="top:316px;font-size:11px;letter-spacing:-0.172px;left:97.50px;">Todos</span>
<span style="top:315px;font-size:11px;letter-spacing:-0.091px;left:270.50px;">Contra apresentação</span>
<span style="top:340px;font-size:11px;letter-spacing:-0.350px;left:53.25px;transform:scaleX(0.971);transform-origin:left center;">ID</span>
<span style="top:340px;font-size:11px;letter-spacing:-0.350px;left:113.75px;">Loja</span>
<span style="top:340px;font-size:11px;letter-spacing:-0.168px;left:194.25px;">Locatário</span>
<span style="top:340px;font-size:11px;letter-spacing:-0.255px;left:298.50px;">Classe da Conta</span>
<span style="top:340px;font-size:11px;letter-spacing:-0.037px;left:406.50px;">Valor Fat.</span>
<span style="top:340px;font-size:11px;letter-spacing:-0.165px;left:470.00px;">Descontos</span>
<span style="top:340px;font-size:11px;letter-spacing:-0.350px;left:548.00px;">Juros</span>
<span style="top:340px;font-size:11px;letter-spacing:-0.306px;left:600.50px;width:42.50px;overflow:hidden;">Correções</span>
<span style="top:356px;font-size:11px;left:29.50px;">15</span>
<span style="top:356px;font-size:11px;letter-spacing:-0.350px;left:93.75px;transform:scaleX(0.896);transform-origin:left center;">BBB-B</span>
<span style="top:356px;font-size:11px;letter-spacing:-0.350px;left:158.50px;transform:scaleX(0.986);transform-origin:left center;">LOCATARIO DIMOB</span>
<span style="top:356px;font-size:11px;letter-spacing:-0.350px;left:280.00px;transform:scaleX(0.973);transform-origin:left center;">Aluguel Mínimo</span>
<span style="top:356px;font-size:11px;right:192.50px;">0,00</span>
<span style="top:356px;font-size:11px;right:128.00px;">0,00</span>
<span style="top:356px;font-size:11px;right:63.00px;">0,00</span>
<span style="top:356px;font-size:11px;left:634.50px;width:8.00px;overflow:hidden;">0,00</span>
<span style="top:372px;font-size:11px;left:29.50px;">17</span>
<span style="top:372px;font-size:11px;letter-spacing:-0.350px;left:93.75px;transform:scaleX(0.896);transform-origin:left center;">BBB-B</span>
<span style="top:372px;font-size:11px;letter-spacing:-0.350px;left:158.50px;transform:scaleX(0.986);transform-origin:left center;">LOCATARIO DIMOB</span>
<span style="top:372px;font-size:11px;letter-spacing:-0.350px;left:280.00px;transform:scaleX(0.973);transform-origin:left center;">Aluguel Mínimo</span>
<span style="top:372px;font-size:11px;right:192.50px;">1.000,00</span>
<span style="top:372px;font-size:11px;right:128.00px;">0,00</span>
<span style="top:372px;font-size:11px;right:63.00px;">0,00</span>
<span style="top:372px;font-size:11px;left:634.50px;width:8.00px;overflow:hidden;">0,00</span>
<span style="top:388px;font-size:11px;left:29.50px;">16</span>
<span style="top:388px;font-size:11px;left:93.75px;">DD</span>
<span style="top:388px;font-size:11px;letter-spacing:-0.350px;left:158.50px;transform:scaleX(0.979);transform-origin:left center;">LOCATARIO CDU</span>
<span style="top:388px;font-size:11px;letter-spacing:-0.350px;left:280.00px;transform:scaleX(0.973);transform-origin:left center;">Aluguel Mínimo</span>
<span style="top:388px;font-size:11px;right:192.50px;">10.000,00</span>
<span style="top:388px;font-size:11px;right:128.00px;">0,00</span>
<span style="top:388px;font-size:11px;right:63.00px;">0,00</span>
<span style="top:388px;font-size:11px;left:634.50px;width:8.00px;overflow:hidden;">0,00</span>
<span style="top:455px;font-size:11px;letter-spacing:-0.200px;left:30.00px;">Imprimir Logotipo no Verso</span>
<span style="top:455px;font-size:11px;letter-spacing:-0.071px;left:178.50px;">Ocultar Mês Ref. do boleto</span>
<span style="top:454px;font-size:11px;font-family:'DejaVu Sans Condensed', 'Liberation Sans', sans-serif;font-weight:bold;letter-spacing:-0.073px;left:355.50px;">Faturado: 11.000,00</span>
<span style="top:454px;font-size:11px;font-family:'DejaVu Sans Condensed', 'Liberation Sans', sans-serif;font-weight:bold;letter-spacing:-0.194px;left:536.25px;">Liquido: 11.000,00</span>
<span style="top:475px;font-size:11px;letter-spacing:-0.235px;left:10.50px;">Nome do Cedente</span>
<span style="top:473px;font-size:11px;letter-spacing:-0.350px;left:103.00px;transform:scaleX(0.973);transform-origin:left center;">PAD - FILIAL TESTE</span>
<span style="top:496px;font-size:11px;letter-spacing:-0.093px;left:10.50px;">Te<u>x</u>to do Recibo</span>
<span style="top:494px;font-size:11px;left:103.00px;transform:scaleX(0.937);transform-origin:left center;">MAPA 1</span>
<span style="top:495px;font-size:11px;letter-spacing:-0.350px;left:497.50px;">Enviar Email</span>
<span style="top:495px;font-size:11px;letter-spacing:-0.350px;left:603.50px;transform:scaleX(0.922);transform-origin:left center;">Sair</span>
<span style="top:519px;font-size:11px;letter-spacing:-0.219px;left:504.50px;">Enviar para COM21</span>
</div></body></html>
